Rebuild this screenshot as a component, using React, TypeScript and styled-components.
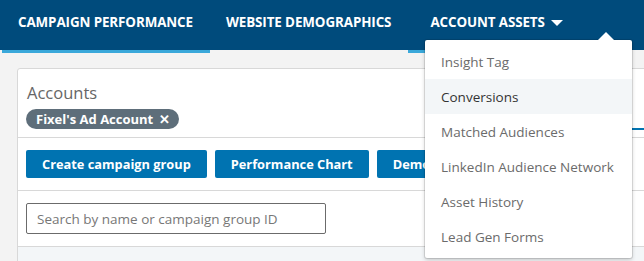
import React from "react";
import styled, { createGlobalStyle } from "styled-components";

const Global = createGlobalStyle`
  html, body { margin: 0; padding: 0; background: #f3f3f3; overflow: hidden; }
  body { font-family: "Open Sans", "Liberation Sans", sans-serif; }
  * { box-sizing: border-box; }
`;

const Page = styled.div`
  position: relative;
  width: 644px;
  height: 261px;
  overflow: hidden;
`;

const Header = styled.nav`
  display: flex;
  height: 50px;
  padding-left: 2px;
  background: #004b7c;
`;

const Tab = styled.div<{ $active?: boolean; $padLeft?: number }>`
  position: relative;
  display: flex;
  align-items: center;
  gap: 6px;
  height: 50px;
  padding: 0 17px 6px ${(p) => p.$padLeft ?? 16}px;
  color: #fff;
  font-size: 13.4px;
  font-weight: 700;
  letter-spacing: -0.1px;
  text-transform: uppercase;
  white-space: nowrap;
  &::after {
    content: "";
    display: ${(p) => (p.$active ? "block" : "none")};
    position: absolute;
    left: 0;
    right: 0;
    bottom: -3px;
    height: 3px;
    background: #3aa8da;
  }
`;

const Caret = styled.span`
  width: 0;
  height: 0;
  border-left: 6px solid transparent;
  border-right: 6px solid transparent;
  border-top: 6px solid #fff;
  margin-top: 2px;
`;

const Main = styled.main`
  padding: 18px 0 0 17px;
`;

const Card = styled.section`
  width: 700px;
  background: #fff;
  border: 1px solid #d8d8d8;
  border-radius: 3px;
`;

const Section = styled.div<{ $pad: string }>`
  display: flex;
  padding: ${(p) => p.$pad};
  border-bottom: 1px solid #d8d8d8;
`;

const AccountsBlock = styled.div`
  display: flex;
  flex-direction: column;
  gap: 5px;
`;

const Title = styled.h2`
  margin: 0 0 0 1px;
  font-size: 16.5px;
  font-weight: 400;
  line-height: 22px;
  color: #666;
`;

const Pill = styled.span`
  display: inline-flex;
  align-items: center;
  gap: 6px;
  height: 20px;
  padding: 0 9px 0 10px;
  border-radius: 10px;
  background: #5e6e7a;
  color: #fff;
  font-size: 13px;
  font-weight: 700;
  align-self: flex-start;
`;

const RightTab = styled.div`
  margin-left: auto;
  align-self: flex-end;
  width: 84px;
  height: 2px;
  margin-bottom: -1px;
  background: #0073b1;
`;

const ButtonRow = styled.div`
  display: flex;
  gap: 8px;
`;

const Button = styled.button`
  height: 28px;
  padding: 0 16px;
  border: none;
  border-radius: 2px;
  background: #0073b1;
  color: #fff;
  font-family: inherit;
  font-size: 12.8px;
  font-weight: 700;
  white-space: nowrap;
`;

const Search = styled.input`
  width: 300px;
  height: 31px;
  padding: 0 10px;
  border: 1px solid #6b6b6b;
  border-radius: 2px;
  font-family: inherit;
  font-size: 13.5px;
  color: #333;
  &::placeholder { color: #777; }
`;

const Footer = styled.div`
  height: 30px;
  background: #f3f6f8;
`;

const Menu = styled.ul`
  position: absolute;
  left: 425px;
  top: 40px;
  width: 207px;
  margin: 0;
  padding: 4px 0;
  list-style: none;
  background: #fff;
  border-radius: 2px;
  box-shadow: 0 0 0 1px rgba(0, 0, 0, 0.1), 0 2px 4px rgba(0, 0, 0, 0.2);
  &::before {
    content: "";
    position: absolute;
    right: 18px;
    top: -8px;
    border-left: 8px solid transparent;
    border-right: 8px solid transparent;
    border-bottom: 8px solid #fff;
  }
`;

const Item = styled.li<{ $hover?: boolean }>`
  height: 35px;
  display: flex;
  align-items: center;
  padding-left: 16px;
  font-size: 13.5px;
  color: ${(p) => (p.$hover ? "#333" : "#6b6b6b")};
  background: ${(p) => (p.$hover ? "#f3f6f8" : "transparent")};
  white-space: nowrap;
`;

const items = [
  "Insight Tag",
  "Conversions",
  "Matched Audiences",
  "LinkedIn Audience Network",
  "Asset History",
  "Lead Gen Forms",
];

export default function App() {
  return (
    <Page>
      <Global />
      <Header>
        <Tab $active>Campaign Performance</Tab>
        <Tab>Website Demographics</Tab>
        <Tab $active $padLeft={22}>
          Account Assets <Caret />
        </Tab>
      </Header>
      <Main>
        <Card>
          <Section $pad="13px 8px 8px 8px">
            <AccountsBlock>
              <Title>Accounts</Title>
              <Pill>Fixel's Ad Account <span>✕</span></Pill>
            </AccountsBlock>
            <RightTab />
          </Section>
          <Section $pad="12px 8px 12px 8px">
            <ButtonRow>
              <Button>Create campaign group</Button>
              <Button>Performance Chart</Button>
              <Button>Demographics</Button>
            </ButtonRow>
          </Section>
          <Section $pad="12px 8px 12px 8px">
            <Search placeholder="Search by name or campaign group ID" />
          </Section>
          <Footer />
        </Card>
      </Main>
      <Menu>
        {items.map((t) => (
          <Item key={t} $hover={t === "Conversions"}>
            {t}
          </Item>
        ))}
      </Menu>
    </Page>
  );
}
